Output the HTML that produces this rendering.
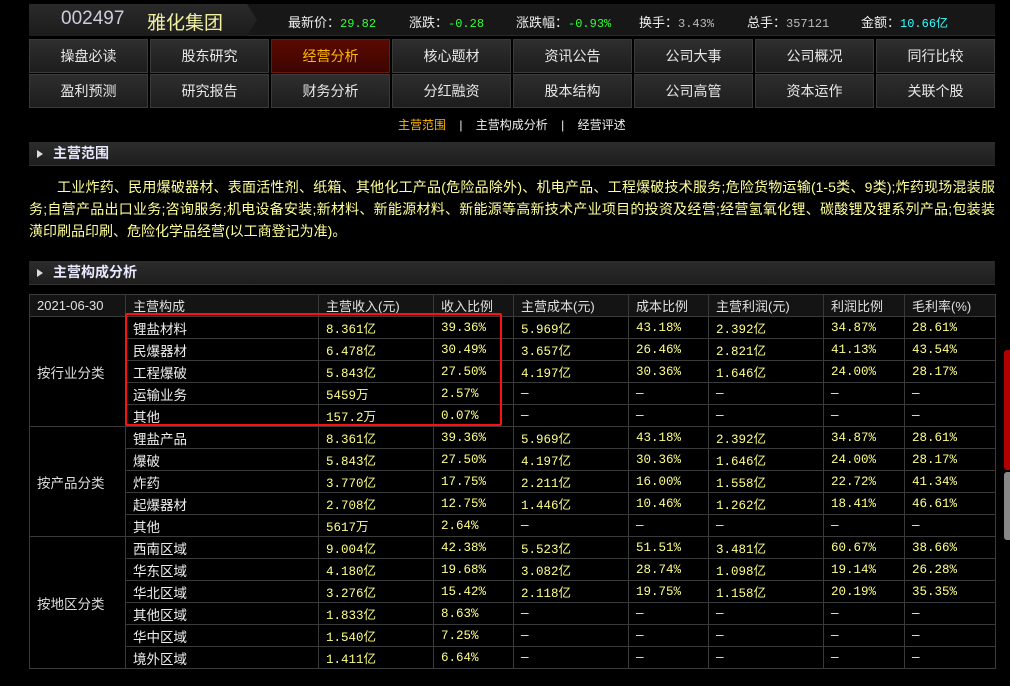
<!DOCTYPE html><html><head><meta charset="utf-8"><style>
*{margin:0;padding:0;box-sizing:border-box}
body{width:1010px;height:686px;background:#000;overflow:hidden;position:relative;font-family:"Liberation Sans","Noto Sans CJK SC",sans-serif;font-size:13px;color:#ddd}
.hdr{position:absolute;left:29px;top:4px;width:966px;height:32px;background:#171717;border-bottom:1px solid #2a2a2a}
.code{position:absolute;left:0;top:0;width:228px;height:32px;background:linear-gradient(#2a2a2a,#1c1c1c);clip-path:polygon(0 0,218px 0,228px 16px,218px 32px,0 32px)}
.code span{position:absolute;top:4px;font-size:19px}
.q{position:absolute;top:8px;font-size:13px;color:#eee;white-space:nowrap}
.g{color:#33ff33;font-family:"Liberation Mono",monospace;font-size:12px}
.w{color:#bbb;font-family:"Liberation Mono",monospace;font-size:12px}
.c{color:#33ffff;font-family:"Liberation Mono",monospace;font-size:12px}
.nav{position:absolute;left:29px;width:970px;height:34px}
.nav div{position:absolute;top:0;width:119px;height:34px;background:linear-gradient(#2e2e2e,#1d1d1d);border:1px solid #3a3a3a;text-align:center;line-height:32px;font-size:14px;color:#e8e8e8}
.nav div.on{background:linear-gradient(#5a0a00,#3d0500);color:#ffb800;border-color:#6a1a0a}
.sub{position:absolute;top:116px;left:398px;font-size:12px;color:#eee;white-space:nowrap}
.sec{position:absolute;left:29px;width:966px;height:24px;background:linear-gradient(#2c2c2c,#1e1e1e);border-bottom:1px solid #333;font-weight:bold;font-size:14px;color:#e8e8ff;line-height:23px;padding-left:24px}
.sec:before{content:"";position:absolute;left:8px;top:8px;border-left:6px solid #ddd;border-top:4px solid transparent;border-bottom:4px solid transparent}
.txt{position:absolute;left:29px;top:176px;width:966px;color:#ffff99;font-size:14px;line-height:22px}
.txt div{white-space:nowrap;text-align:justify;text-align-last:justify}
.txt div.l{text-align-last:left}
table{position:absolute;left:29px;top:294px;width:966px;border-collapse:collapse;table-layout:fixed}
td{border:1px solid #3a3a3a;height:22px;padding:0 0 0 7px;white-space:nowrap;color:#ffff88;font-family:"Liberation Mono","Noto Sans CJK SC",monospace;font-size:12.5px}
tr.h td{color:#e0e0e0;background:#141414;font-family:"Liberation Sans","Noto Sans CJK SC",sans-serif;font-size:13px}
td.n{color:#eee;font-family:"Liberation Sans","Noto Sans CJK SC",sans-serif;font-size:13.5px}
td.k{color:#ddd;font-family:"Liberation Sans","Noto Sans CJK SC",sans-serif;font-size:13.5px}
.box{position:absolute;left:125px;top:313px;width:377px;height:113px;border:2px solid #ff1010;border-radius:2px}
</style></head><body>
<div class="hdr">
<div class="code"><span style="left:32px;color:#ccd;font-family:'Liberation Sans',sans-serif">002497</span><span style="left:118px;color:#f0f0a0">雅化集团</span></div>
<div class="q" style="left:259px">最新价：<span class="g">29.82</span></div>
<div class="q" style="left:380px">涨跌：<span class="g">-0.28</span></div>
<div class="q" style="left:487px">涨跌幅：<span class="g">-0.93%</span></div>
<div class="q" style="left:610px">换手：<span class="w">3.43%</span></div>
<div class="q" style="left:718px">总手：<span class="w">357121</span></div>
<div class="q" style="left:832px">金额：<span class="c">10.66亿</span></div>
</div>
<div class="nav" style="top:39px">
<div style="left:0">操盘必读</div><div style="left:121px">股东研究</div><div class="on" style="left:242px">经营分析</div><div style="left:363px">核心题材</div><div style="left:484px">资讯公告</div><div style="left:605px">公司大事</div><div style="left:726px">公司概况</div><div style="left:847px">同行比较</div></div>
<div class="nav" style="top:74px">
<div style="left:0">盈利预测</div><div style="left:121px">研究报告</div><div style="left:242px">财务分析</div><div style="left:363px">分红融资</div><div style="left:484px">股本结构</div><div style="left:605px">公司高管</div><div style="left:726px">资本运作</div><div style="left:847px">关联个股</div></div>
<div class="sub"><span style="color:#ffb800">主营范围</span>&nbsp;&nbsp;&nbsp;&nbsp;|&nbsp;&nbsp;&nbsp;&nbsp;主营构成分析&nbsp;&nbsp;&nbsp;&nbsp;|&nbsp;&nbsp;&nbsp;&nbsp;经营评述</div>
<div class="sec" style="top:142px">主营范围</div>
<div class="txt">
<div style="padding-left:28px">工业炸药、民用爆破器材、表面活性剂、纸箱、其他化工产品(危险品除外)、机电产品、工程爆破技术服务;危险货物运输(1-5类、9类);炸药现场混装服</div>
<div>务;自营产品出口业务;咨询服务;机电设备安装;新材料、新能源材料、新能源等高新技术产业项目的投资及经营;经营氢氧化锂、碳酸锂及锂系列产品;包装装</div>
<div class="l">潢印刷品印刷、危险化学品经营(以工商登记为准)。</div>
</div>
<div class="sec" style="top:261px">主营构成分析</div>
<table>
<colgroup><col style="width:96px"><col style="width:193px"><col style="width:115px"><col style="width:80px"><col style="width:115px"><col style="width:80px"><col style="width:115px"><col style="width:81px"><col style="width:91px"></colgroup>
<tr class="h"><td>2021-06-30</td><td>主营构成</td><td>主营收入(元)</td><td>收入比例</td><td>主营成本(元)</td><td>成本比例</td><td>主营利润(元)</td><td>利润比例</td><td>毛利率(%)</td></tr>
<tr><td class="k" rowspan="5">按行业分类</td><td class="n">锂盐材料</td><td>8.361亿</td><td>39.36%</td><td>5.969亿</td><td>43.18%</td><td>2.392亿</td><td>34.87%</td><td>28.61%</td></tr>
<tr><td class="n">民爆器材</td><td>6.478亿</td><td>30.49%</td><td>3.657亿</td><td>26.46%</td><td>2.821亿</td><td>41.13%</td><td>43.54%</td></tr>
<tr><td class="n">工程爆破</td><td>5.843亿</td><td>27.50%</td><td>4.197亿</td><td>30.36%</td><td>1.646亿</td><td>24.00%</td><td>28.17%</td></tr>
<tr><td class="n">运输业务</td><td>5459万</td><td>2.57%</td><td>—</td><td>—</td><td>—</td><td>—</td><td>—</td></tr>
<tr><td class="n">其他</td><td>157.2万</td><td>0.07%</td><td>—</td><td>—</td><td>—</td><td>—</td><td>—</td></tr>
<tr><td class="k" rowspan="5">按产品分类</td><td class="n">锂盐产品</td><td>8.361亿</td><td>39.36%</td><td>5.969亿</td><td>43.18%</td><td>2.392亿</td><td>34.87%</td><td>28.61%</td></tr>
<tr><td class="n">爆破</td><td>5.843亿</td><td>27.50%</td><td>4.197亿</td><td>30.36%</td><td>1.646亿</td><td>24.00%</td><td>28.17%</td></tr>
<tr><td class="n">炸药</td><td>3.770亿</td><td>17.75%</td><td>2.211亿</td><td>16.00%</td><td>1.558亿</td><td>22.72%</td><td>41.34%</td></tr>
<tr><td class="n">起爆器材</td><td>2.708亿</td><td>12.75%</td><td>1.446亿</td><td>10.46%</td><td>1.262亿</td><td>18.41%</td><td>46.61%</td></tr>
<tr><td class="n">其他</td><td>5617万</td><td>2.64%</td><td>—</td><td>—</td><td>—</td><td>—</td><td>—</td></tr>
<tr><td class="k" rowspan="6">按地区分类</td><td class="n">西南区域</td><td>9.004亿</td><td>42.38%</td><td>5.523亿</td><td>51.51%</td><td>3.481亿</td><td>60.67%</td><td>38.66%</td></tr>
<tr><td class="n">华东区域</td><td>4.180亿</td><td>19.68%</td><td>3.082亿</td><td>28.74%</td><td>1.098亿</td><td>19.14%</td><td>26.28%</td></tr>
<tr><td class="n">华北区域</td><td>3.276亿</td><td>15.42%</td><td>2.118亿</td><td>19.75%</td><td>1.158亿</td><td>20.19%</td><td>35.35%</td></tr>
<tr><td class="n">其他区域</td><td>1.833亿</td><td>8.63%</td><td>—</td><td>—</td><td>—</td><td>—</td><td>—</td></tr>
<tr><td class="n">华中区域</td><td>1.540亿</td><td>7.25%</td><td>—</td><td>—</td><td>—</td><td>—</td><td>—</td></tr>
<tr><td class="n">境外区域</td><td>1.411亿</td><td>6.64%</td><td>—</td><td>—</td><td>—</td><td>—</td><td>—</td></tr>
</table>
<div class="box"></div>
<div style="position:absolute;left:1004px;top:350px;width:6px;height:120px;background:#b00000;border-radius:3px 0 0 3px"></div>
<div style="position:absolute;left:1004px;top:472px;width:6px;height:68px;background:#888;border-radius:3px 0 0 3px"></div>
</body></html>
